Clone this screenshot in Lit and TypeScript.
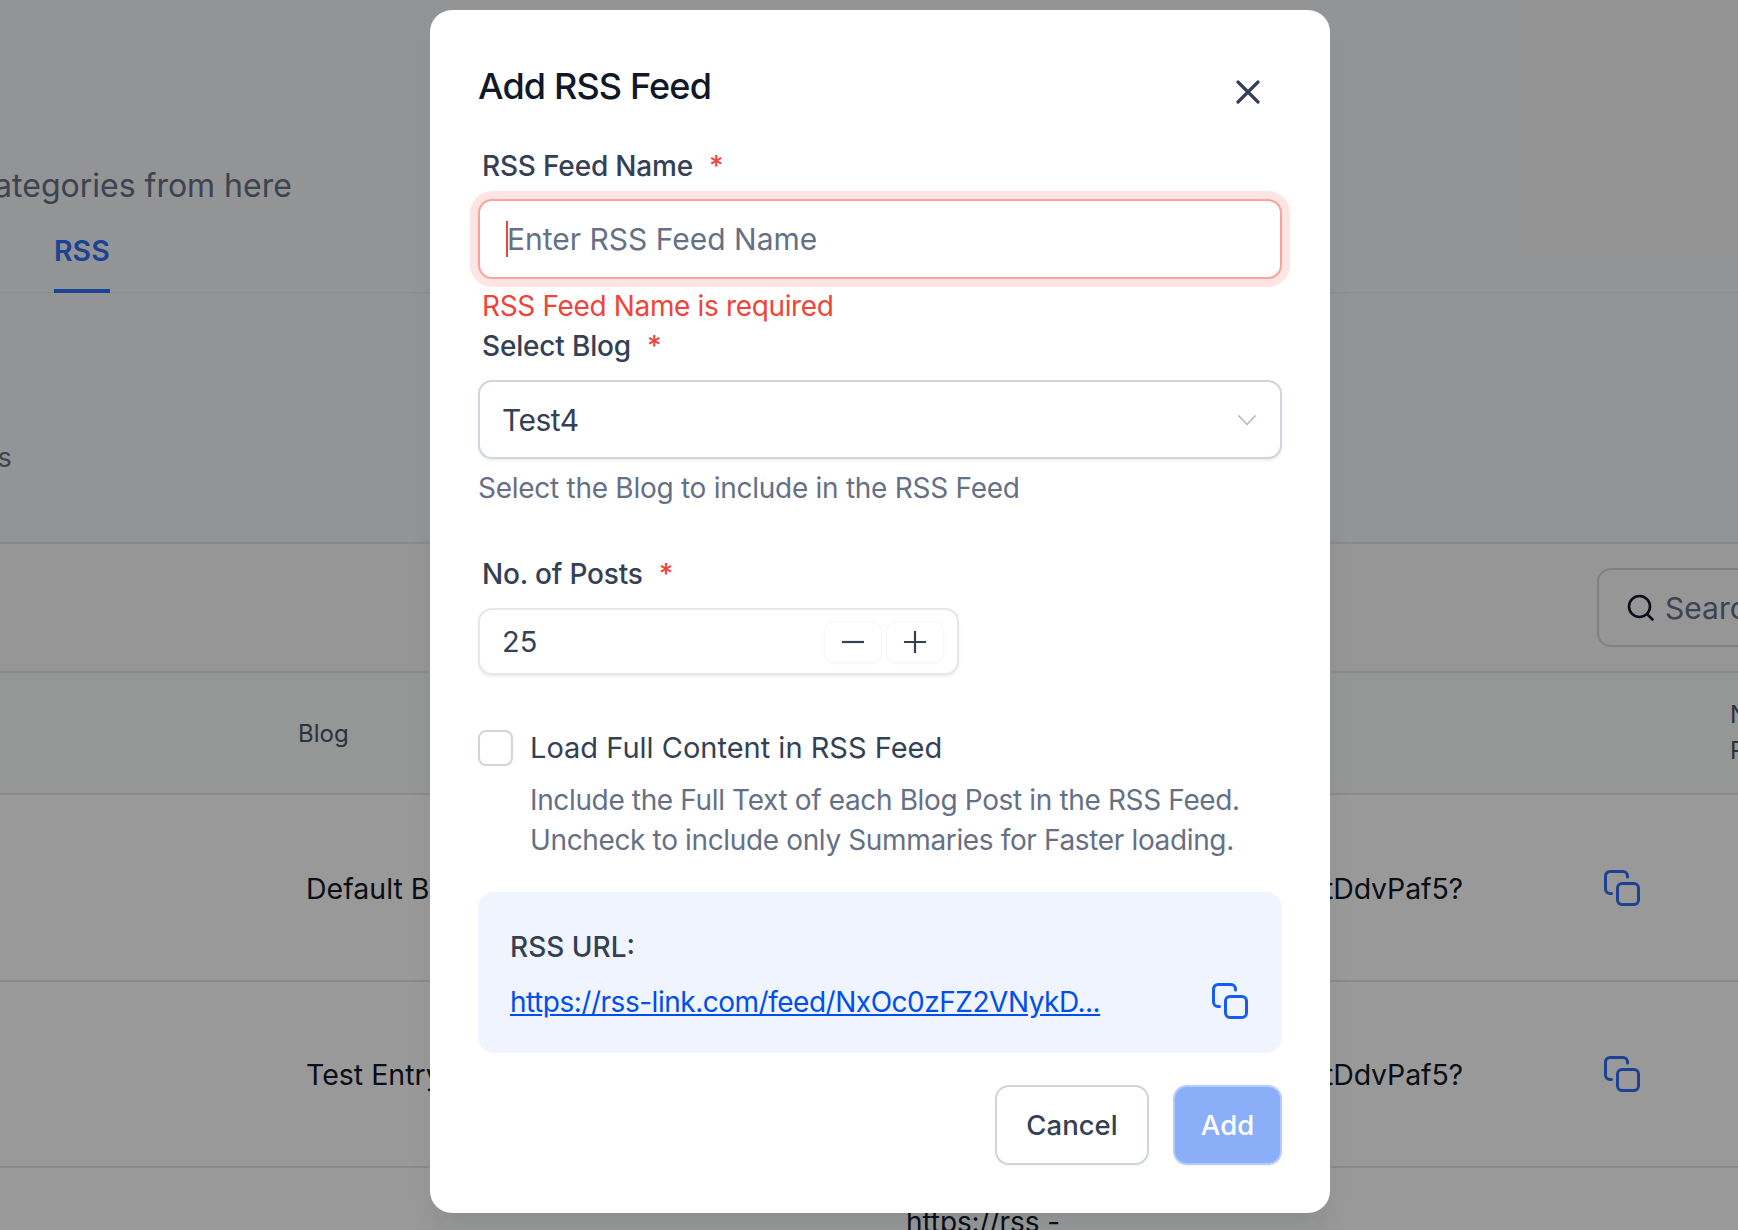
import { LitElement, html, css } from "lit";
import { customElement } from "lit/decorators.js";

const copyIcon = html`<svg class="copy" viewBox="0 0 36 36" fill="none" stroke="currentColor" stroke-width="3" stroke-linecap="round" stroke-linejoin="round"><path d="M23.5 7V6a4.5 4.5 0 0 0-4.500-4.500H6A4.500 4.500 0 0 0 1.500 6v13A4.500 4.500 0 0 0 6 23.500h1.500"/><rect x="13.500" y="13.500" width="21" height="21" rx="4.500"/></svg>`;

@customElement("app-root")
export class AppRoot extends LitElement {
  static styles = css`
    :host { display: block; font-family: Inter, "Liberation Sans", sans-serif; }
    * { box-sizing: border-box; }
    .viewport { position: relative; width: 1738px; height: 1230px; overflow: hidden; background: #fff; }
    .page { width: 1738px; height: 1230px; display: flex; flex-direction: column; overflow: hidden; background: #fff; color: #101828; }
    .top { background: #f6f7f9; height: 542px; display: flex; flex-direction: column; flex: none; }
    .sub { margin-top: 166px; height: 40px; line-height: 40px; font-size: 32px; color: #667085; white-space: nowrap; margin-left: -24.500px; }
    .tabs { margin-top: 21px; height: 66px; border-bottom: 1px solid #e4e7ec; padding-left: 54px; flex: none; }
    .tab { display: inline-block; height: 66px; border-bottom: 4px solid #2f6ef5; color: #2f6ef5; font-size: 28.500px; font-weight: 600; line-height: 47px; }
    .cut { margin-top: 145px; margin-left: -27px; font-size: 27px; line-height: 40px; color: #667085; }
    .toolbar { height: 129px; flex: none; border-top: 2px solid #e4e7ec; display: flex; align-items: flex-start; padding-top: 24px; padding-left: 1597px; overflow: hidden; background: #fbfbfc; }
    .search { flex: none; width: 300px; height: 79px; border: 2px solid #d0d5dd; border-radius: 14px; display: flex; align-items: center; gap: 10px; padding-left: 28px; font-size: 30px; color: #667085; }
    .search svg { width: 28px; height: 28px; flex: none; }
    .thead, .row { display: grid; grid-template-columns: 298px 600px 565px 141px 134px; align-items: center; border-top: 2px solid #e4e7ec; flex: none; }
    .thead { height: 122px; background: #f9fafb; font-size: 24px; color: #475467; }
    .nf { line-height: 36px; white-space: nowrap; font-size: 24px; grid-column: 5; padding-left: 126px; }
    .row { height: 187px; font-size: 28.500px; color: #101828; }
    .row.second { height: 186px; }
    .row > .blog { grid-column: 2; padding: 1px 0 0 8px; white-space: nowrap; }
    .row > .url { grid-column: 3; text-align: right; padding-top: 1px; letter-spacing: -0.15px; }
    .row > .ic { grid-column: 4; padding-left: 141px; color: #2f6ef5; display: flex; white-space: nowrap; }
    .row.last { align-items: start; }
    .row.last .url { text-align: left; grid-column: 2 / 4; padding: 37px 0 0 608px; font-size: 28px; letter-spacing: -0.1px; }
    .copy { width: 36px; height: 36px; display: block; flex: none; }

    .overlay { position: absolute; inset: 0; background: rgba(0, 0, 0, 0.4); }
    .modal { position: absolute; left: 430px; top: 10px; width: 900px; height: 1203px; background: #fff; border-radius: 22px; padding: 56px 48px 48px; display: flex; flex-direction: column; box-shadow: 0 20px 24px -4px rgba(16,24,40,.08); color: #344054; }
    .head { height: 82px; display: flex; justify-content: space-between; align-items: flex-start; flex: none; }
    h2 { margin: 0; font-size: 36px; line-height: 41px; font-weight: 500; color: #101828; letter-spacing: -0.85px; }
    .close { width: 24px; height: 24px; margin: 14px 22px 0 0; color: #344054; display: block; }
    .lbl { display: flex; gap: 16px; font-size: 28px; letter-spacing: -0.18px; line-height: 36px; height: 36px; font-weight: 500; color: #344054; padding-left: 4px; flex: none; }
    .req { color: #f04438; font-weight: 500; }
    .field { height: 79px; flex: none; width: 804px; border: 2px solid #d0d5dd; border-radius: 14px; display: flex; align-items: center; background: #fff; font-size: 30px; box-shadow: 0 2px 3px rgba(16,24,40,.07); }
    .name { margin-top: 15px; border-color: #fda29b; box-shadow: 0 0 0 8px #fee4e2; padding-left: 26px; color: #667085; height: 80px; }
    .caret { width: 2px; height: 36px; background: #f04438; flex: none; margin-right: -1px; }
    .err { margin-top: 9px; font-size: 28px; letter-spacing: -0.35px; line-height: 36px; height: 36px; color: #f04438; padding-left: 4px; flex: none; }
    .sel { margin-top: 16px; padding: 1px 23px 0 22px; justify-content: space-between; color: #344054; letter-spacing: -0.5px; }
    .sel svg { width: 20px; height: 12px; }
    .hint { margin-top: 11px; font-size: 28px; letter-spacing: -0.27px; line-height: 36px; color: #667085; flex: none; }
    .num { margin-top: 16px; width: 481px; height: 67px; border-color: #e4e7ec; padding: 0 13px 0 22px; font-size: 29px; }
    .numval { flex: 1; }
    .step { width: 58px; height: 42px; border: 1px solid #f5f6f8; border-radius: 10px; display: flex; align-items: center; justify-content: center; color: #344054; margin-left: 4px; box-shadow: 0 1px 2px rgba(16,24,40,.04); }
    .step svg { width: 24px; height: 24px; }
    .check { margin-top: 54px; display: flex; gap: 17px; height: 37px; align-items: center; flex: none; }
    .box { width: 35px; height: 36px; border: 2px solid #d0d5dd; border-radius: 8px; flex: none; }
    .chklbl { font-size: 29px; color: #344054; line-height: 36px; }
    .desc { margin: 14px 0 0 52px; font-size: 28px; letter-spacing: -0.36px; line-height: 40px; color: #667085; flex: none; white-space: nowrap; }
    .urlbox { margin-top: 32px; width: 804px; height: 161px; background: #eff4ff; border-radius: 16px; padding: 37px 32px 32px; flex: none; }
    .urltitle { font-size: 28px; line-height: 36px; font-weight: 500; color: #344054; }
    .urlline { margin-top: 19px; display: flex; justify-content: space-between; align-items: center; height: 36px; }
    a { color: #004eeb; font-size: 28px; letter-spacing: -0.48px; line-height: 36px; text-decoration: underline; }
    .urlline .copy { color: #155eef; margin: 0 2px 3px 0; }
    .actions { margin-top: 32px; width: 804px; display: flex; justify-content: flex-end; gap: 24px; flex: none; }
    .btn { height: 80px; border-radius: 14px; border: 2px solid #d0d5dd; font-size: 27.500px; font-weight: 500; display: flex; align-items: center; justify-content: center; color: #344054; background: #fff; box-shadow: 0 1px 2px rgba(16,24,40,.05); }
    .cancel { width: 154px; }
    .add { width: 109px; background: #8aaef7; border-color: #b2ccff; color: #fff; }
  `;

  render() {
    return html`
      <div class="viewport">
        <div class="page">
          <div class="top">
            <div class="sub">categories from here</div>
            <div class="tabs"><span class="tab">RSS</span></div>
            <div class="cut">rss</div>
          </div>
          <div class="toolbar">
            <div class="search">
              <svg viewBox="0 0 28 28" fill="none" stroke="#101828" stroke-width="2.600" stroke-linecap="round"><circle cx="12.500" cy="12.500" r="10.500"/><path d="M20.500 20.500 25.500 25.500"/></svg>
              <span>Search</span>
            </div>
          </div>
          <div class="thead"><span></span><span>Blog</span><span></span><span></span><div class="nf">No. of<br />Posts</div></div>
          <div class="row"><span class="blog">Default Blog</span><span class="url">tDdvPaf5?</span><span class="ic">${copyIcon}</span></div>
          <div class="row second"><span class="blog">Test Entry</span><span class="url">tDdvPaf5?</span><span class="ic">${copyIcon}</span></div>
          <div class="row last"><span class="url">https://rss -</span></div>
        </div>
        <div class="overlay"></div>
        <div class="modal">
          <div class="head">
            <h2>Add RSS Feed</h2>
            <svg class="close" viewBox="0 0 24 24" fill="none" stroke="currentColor" stroke-width="3.200" stroke-linecap="round"><path d="M2 2l20 20M22 2 2 22"/></svg>
          </div>
          <div class="lbl">RSS Feed Name <span class="req">*</span></div>
          <div class="field name"><span class="caret"></span><span>Enter RSS Feed Name</span></div>
          <div class="err">RSS Feed Name is required</div>
          <div class="lbl" style="margin-top:4px">Select Blog <span class="req">*</span></div>
          <div class="field sel"><span>Test4</span><svg viewBox="0 0 20 12" fill="none" stroke="#b0b8c5" stroke-width="1.500"><path d="M1.500 1.500 10 10.500l8.500-9"/></svg></div>
          <div class="hint">Select the Blog to include in the RSS Feed</div>
          <div class="lbl" style="margin-top:50px">No. of Posts <span class="req">*</span></div>
          <div class="field num"><span class="numval">25</span>
            <span class="step"><svg viewBox="0 0 24 24" fill="none" stroke="currentColor" stroke-width="2.200"><path d="M1 12h22"/></svg></span>
            <span class="step"><svg viewBox="0 0 24 24" fill="none" stroke="currentColor" stroke-width="2.200"><path d="M1 12h22M12 1v22"/></svg></span>
          </div>
          <div class="check"><span class="box"></span><span class="chklbl">Load Full Content in RSS Feed</span></div>
          <div class="desc">Include the Full Text of each Blog Post in the RSS Feed.<br />Uncheck to include only Summaries for Faster loading.</div>
          <div class="urlbox">
            <div class="urltitle">RSS URL:</div>
            <div class="urlline"><a href="#">https://rss-link.com/feed/NxOc0zFZ2VNykD...</a>${copyIcon}</div>
          </div>
          <div class="actions"><div class="btn cancel">Cancel</div><div class="btn add">Add</div></div>
        </div>
      </div>
    `;
  }
}
